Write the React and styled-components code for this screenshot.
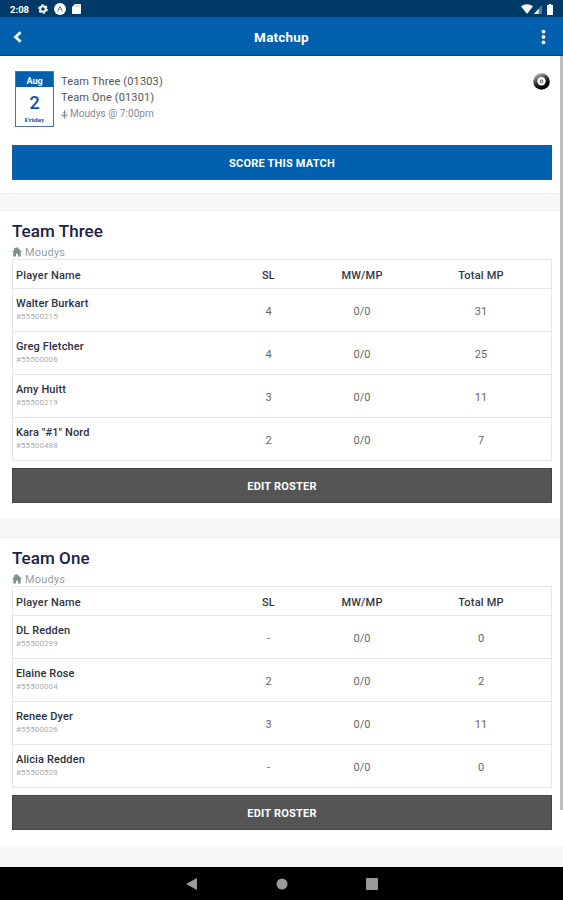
import React from "react";
import styled, { createGlobalStyle } from "styled-components";

const teams = [
  {
    name: "Team Three",
    venue: "Moudys",
    players: [
      { name: "Walter Burkart", id: "#55500215", sl: "4", mw: "0/0", total: "31" },
      { name: "Greg Fletcher", id: "#55500006", sl: "4", mw: "0/0", total: "25" },
      { name: "Amy Huitt", id: "#55500219", sl: "3", mw: "0/0", total: "11" },
      { name: 'Kara "#1" Nord', id: "#55500488", sl: "2", mw: "0/0", total: "7" },
    ],
  },
  {
    name: "Team One",
    venue: "Moudys",
    players: [
      { name: "DL Redden", id: "#55500299", sl: "-", mw: "0/0", total: "0" },
      { name: "Elaine Rose", id: "#55500004", sl: "2", mw: "0/0", total: "2" },
      { name: "Renee Dyer", id: "#55500026", sl: "3", mw: "0/0", total: "11" },
      { name: "Alicia Redden", id: "#55500528", sl: "-", mw: "0/0", total: "0" },
    ],
  },
];

function StatusBar() {
  return (
    <Status>
      <Clock>2:08</Clock>
      <svg width="10" height="10" viewBox="0 0 10 10">
        <circle cx="5" cy="5" r="2.8" fill="none" stroke="#fff" strokeWidth="2" />
        <circle cx="5" cy="5" r="4.2" fill="none" stroke="#fff" strokeWidth="1.3" strokeDasharray="2.2 2.2" />
      </svg>
      <svg width="12" height="12" viewBox="0 0 12 12">
        <circle cx="6" cy="6" r="6" fill="#fff" />
        <path d="M3.6 8.3 6 3.5l2.4 4.8M6 6v1" fill="none" stroke="#5c7d9b" strokeWidth="1" />
      </svg>
      <svg width="9" height="10" viewBox="0 0 9 10">
        <path d="M3 0h5.2q.8 0 .8.8v8.4q0 .8-.8.8H.8Q0 10 0 9.2V3z" fill="#fff" />
        <path d="M3.5 1.3v1.6M5.3 1.3v1.6M7.1 1.3v1.6" stroke="#8fa5b9" strokeWidth=".8" />
      </svg>
      <Signals>
        <svg width="12" height="10" viewBox="0 0 12 10">
          <path d="M0 2.3Q6-2 12 2.3L6 10z" fill="#fff" />
        </svg>
        <svg width="8" height="9" viewBox="0 0 8 9">
          <path d="M8 0v9H0z" fill="#5a7d9c" />
          <path d="M4.6 3.8V9H0z" fill="#fff" />
        </svg>
        <svg className="battery" width="6" height="11" viewBox="0 0 6 11">
          <path d="M1.7 0h2.6v1H6v10H0V1h1.7z" fill="#fff" />
        </svg>
      </Signals>
    </Status>
  );
}

function Team({ team }) {
  return (
    <TeamSection>
      <h2>{team.name}</h2>
      <Venue>
        <svg width="10" height="12" viewBox="0 0 10 12">
          <path d="M5 0 10 5H8.7v4.5H6V6.8H4v2.7H1.3V5H0L2 3V.8h1.4v.8z" fill="#7f9292" />
        </svg>
        {team.venue}
      </Venue>
      <Table>
        <HeadRow>
          <span>Player Name</span>
          <span>SL</span>
          <span>MW/MP</span>
          <span>Total MP</span>
        </HeadRow>
        {team.players.map((player) => (
          <Row key={player.id}>
            <Player>
              <strong>{player.name}</strong>
              <small>{player.id}</small>
            </Player>
            <span>{player.sl}</span>
            <span>{player.mw}</span>
            <span>{player.total}</span>
          </Row>
        ))}
      </Table>
      <Button>EDIT ROSTER</Button>
    </TeamSection>
  );
}

export default function App() {
  return (
    <Screen>
      <GlobalStyle />
      <StatusBar />
      <Header>
        <svg width="9" height="12" viewBox="0 0 9 12">
          <path d="M7.6 1.2 2.5 6l5.1 4.8" fill="none" stroke="#fff" strokeWidth="2.8" />
        </svg>
        <h1>Matchup</h1>
        <svg width="5" height="16" viewBox="0 0 5 16">
          <circle cx="2.5" cy="2.6" r="1.9" fill="#fff" />
          <circle cx="2.5" cy="8" r="1.9" fill="#fff" />
          <circle cx="2.5" cy="13.4" r="1.9" fill="#fff" />
        </svg>
      </Header>
      <Content>
        <Match>
          <MatchInfo>
            <DateCard>
              <div className="month">Aug</div>
              <div className="day">2</div>
              <div className="weekday">Friday</div>
            </DateCard>
            <Details>
              <p>Team Three (01303)</p>
              <p>Team One (01301)</p>
              <Place>
                <svg width="7" height="9" viewBox="0 0 7 9">
                  <path d="M3.5 0v8.5M1.6 2.3h3.8M0 5h7M1.3 7.3l2.2-2 2.2 2" fill="none" stroke="#84929b" strokeWidth="1" />
                </svg>
                Moudys @ 7:00pm
              </Place>
            </Details>
            <svg width="17" height="17" viewBox="0 0 17 17">
              <defs>
                <linearGradient id="ball" x1="0.2" y1="0" x2="0.6" y2="0.8">
                  <stop offset="0" stopColor="#c4c4c4" />
                  <stop offset="0.6" stopColor="#333" />
                  <stop offset="1" stopColor="#000" />
                </linearGradient>
              </defs>
              <circle cx="8.5" cy="8.5" r="8.3" fill="url(#ball)" />
              <circle cx="8.5" cy="8.3" r="4.2" fill="#fff" />
              <circle cx="8.5" cy="8.3" r="1.4" fill="#ccc" stroke="#555" strokeWidth=".9" />
            </svg>
          </MatchInfo>
          <Button $primary>SCORE THIS MATCH</Button>
        </Match>
        {teams.map((team) => (
          <Team key={team.name} team={team} />
        ))}
        <ScrollThumb />
      </Content>
      <NavBar>
        <svg width="12" height="12" viewBox="0 0 12 12">
          <path d="M0 6 11 0v12z" fill="#999" />
        </svg>
        <svg width="12" height="12" viewBox="0 0 12 12">
          <circle cx="6" cy="6" r="5.5" fill="#999" />
        </svg>
        <svg width="12" height="12" viewBox="0 0 12 12">
          <rect width="12" height="12" rx="1" fill="#999" />
        </svg>
      </NavBar>
    </Screen>
  );
}

const GlobalStyle = createGlobalStyle`
  * {
    box-sizing: border-box;
  }
  body {
    margin: 0;
    font-family: Roboto, "Liberation Sans", sans-serif;
  }
  h1, h2, p {
    margin: 0;
  }
  svg {
    display: block;
    flex-shrink: 0;
  }
`;

const Screen = styled.div`
  width: 563px;
  height: 900px;
  display: flex;
  flex-direction: column;
  overflow: hidden;
  background: #f7f7f7;
`;

const Status = styled.div`
  height: 17px;
  flex-shrink: 0;
  display: flex;
  align-items: center;
  gap: 6px;
  padding: 1px 10px 0;
  background: #003a67;
`;

const Clock = styled.span`
  width: 22px;
  font-size: 9.5px;
  font-weight: 700;
  color: #fff;
`;

const Signals = styled.div`
  display: flex;
  align-items: center;
  gap: 1px;
  margin-left: auto;
  .battery {
    margin-left: 4px;
  }
`;

const Header = styled.header`
  height: 39px;
  flex-shrink: 0;
  display: flex;
  align-items: center;
  justify-content: space-between;
  padding: 2px 17px 0 13px;
  background: #0060ad;
  border-bottom: 1px solid #004a94;
  h1 {
    font-size: 13.5px;
    line-height: 20px;
    font-weight: 700;
    letter-spacing: 0.2px;
    color: #fff;
  }
`;

const Content = styled.main`
  position: relative;
  flex: 1;
`;

const Match = styled.section`
  height: 138px;
  padding: 15px 11px 0 12px;
  background: #fff;
  border-bottom: 1px solid #f0f0f0;
`;

const MatchInfo = styled.div`
  height: 74px;
  display: flex;
  align-items: flex-start;
  padding: 0 2px 0 3px;
  > svg {
    margin: 2px 0 0 auto;
  }
`;

const DateCard = styled.div`
  width: 39px;
  height: 56px;
  border: 1px solid #4c72ae;
  text-align: center;
  color: #0f4ea3;
  .month {
    height: 15px;
    font-size: 9px;
    line-height: 18px;
    font-weight: 700;
    color: #fff;
    background: #0060ad;
  }
  .day {
    height: 28px;
    font-size: 18px;
    line-height: 31px;
    font-weight: 500;
  }
  .weekday {
    font-family: "Liberation Serif", serif;
    font-size: 7px;
    line-height: 10px;
    font-weight: 700;
  }
`;

const Details = styled.div`
  margin: 3px 0 0 7px;
  font-size: 11px;
  line-height: 16px;
  letter-spacing: 0.15px;
  color: #555;
`;

const Place = styled.p`
  display: flex;
  align-items: center;
  gap: 2px;
  font-size: 10px;
  letter-spacing: 0.05px;
  color: #7f8b94;
`;

const Button = styled.button`
  display: block;
  width: 100%;
  height: 35px;
  padding: 1px 0 0;
  border: 1px solid ${({ $primary }) => ($primary ? "#1a59a6" : "#444")};
  font-family: inherit;
  font-size: 11px;
  font-weight: 700;
  letter-spacing: 0.2px;
  color: #fff;
  background: ${({ $primary }) => ($primary ? "#0060ad" : "#555")};
`;

const TeamSection = styled.section`
  height: 309px;
  margin-top: 16px;
  padding: 9px 11px 0 12px;
  background: #fff;
  border-top: 1px solid #ececec;
  & + & {
    margin-top: 18px;
  }
  h2 {
    font-size: 17px;
    line-height: 22px;
    font-weight: 500;
    letter-spacing: 0.05px;
    color: #1b2144;
  }
`;

const Venue = styled.div`
  height: 17px;
  display: flex;
  align-items: center;
  gap: 3px;
  padding-top: 4px;
  font-size: 11px;
  letter-spacing: 0.2px;
  color: #92a09f;
`;

const Table = styled.div`
  margin-bottom: 7px;
  border: 1px solid #e6e6e6;
`;

const HeadRow = styled.div`
  height: 28px;
  display: grid;
  grid-template-columns: 211px 89px 98px 1fr;
  align-items: center;
  padding-top: 3px;
  font-size: 11px;
  font-weight: 500;
  letter-spacing: 0.2px;
  text-align: center;
  color: #33363f;
  span:first-child {
    padding-left: 3px;
    text-align: left;
  }
`;

const Row = styled(HeadRow)`
  height: 43px;
  padding-top: 2px;
  border-top: 1px solid #e6e6e6;
  font-weight: 400;
  letter-spacing: 0;
  color: #666;
`;

const Player = styled.div`
  padding: 0 0 3px 3px;
  text-align: left;
  strong {
    display: block;
    line-height: 14px;
    font-weight: 500;
    letter-spacing: 0.12px;
    color: #2d3042;
  }
  small {
    display: block;
    font-size: 8px;
    line-height: 12px;
    letter-spacing: 0.1px;
    color: #a9adb0;
  }
`;

const ScrollThumb = styled.div`
  position: absolute;
  top: 0;
  right: 0;
  width: 3px;
  height: 754px;
  background: #bdbdbd;
`;

const NavBar = styled.nav`
  height: 33px;
  flex-shrink: 0;
  display: flex;
  align-items: center;
  justify-content: center;
  gap: 78px;
  background: #000;
`;
